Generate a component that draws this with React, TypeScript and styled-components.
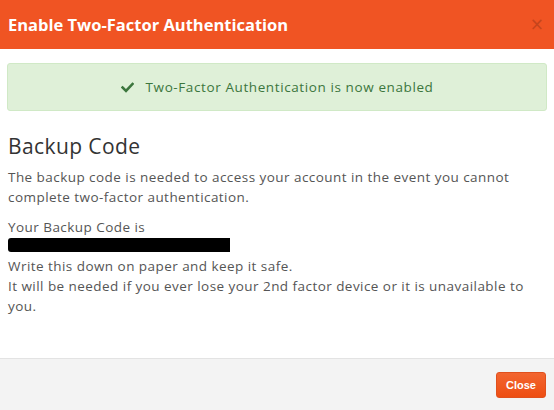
import React from "react";
import styled, { createGlobalStyle } from "styled-components";

const Global = createGlobalStyle`
  html, body { margin: 0; padding: 0; background: #fff; }
  body { font-family: "Open Sans", sans-serif; }
  * { box-sizing: border-box; }
`;

const Modal = styled.div`
  width: 554px;
  height: 410px;
  display: flex;
  flex-direction: column;
  background: #fff;
`;

const Header = styled.div`
  height: 49px;
  background: #f05423;
  display: flex;
  align-items: center;
  justify-content: space-between;
  padding: 0 10px 0 8px;
`;

const Title = styled.h4`
  margin: 0;
  font-family: "Open Sans", sans-serif;
  font-weight: 700;
  font-size: 16.5px;
  color: #fff;
`;

const CloseX = styled.button`
  border: 0;
  background: transparent;
  color: #b8401a;
  font-family: "DejaVu Sans", sans-serif;
  font-size: 17px;
  padding: 0;
  line-height: 1;
  opacity: 0.75;
  cursor: pointer;
`;

const Body = styled.div`
  flex: 1;
  padding: 14px 7px 0 7px;
  font-family: "Open Sans", sans-serif;
  font-size: 13.5px;
  letter-spacing: 0.45px;
  color: #555;
`;

const Alert = styled.div`
  height: 48px;
  background: #dff0d8;
  border: 1px solid #d0e9c6;
  border-radius: 3px;
  color: #3c763d;
  display: flex;
  align-items: center;
  justify-content: center;
  gap: 12px;
  letter-spacing: 0.6px;
`;

const Heading = styled.h3`
  margin: 21px 0 0 1px;
  font-family: "Open Sans", sans-serif;
  font-weight: 500;
  font-size: 21px;
  letter-spacing: 0.4px;
  line-height: 28px;
  color: #333;
`;

const Para = styled.p<{ $top?: number }>`
  margin: ${(p) => p.$top ?? 0}px 0 0 1px;
  line-height: 20px;
`;

const Redacted = styled.div`
  width: 222px;
  height: 14px;
  background: #000;
  border-radius: 3px 0 0 3px;
  margin: 1px 0 4px 1px;
`;

const Footer = styled.div`
  height: 52px;
  background: #f3f3f3;
  border-top: 1px solid #e3e3e3;
  display: flex;
  align-items: center;
  justify-content: flex-end;
  padding: 0 8px 0 0;
`;

const Button = styled.button`
  width: 50px;
  height: 26px;
  border: 1px solid #e0501d;
  border-radius: 3px;
  background: linear-gradient(#f26530, #ee4e12);
  color: #fff;
  font-family: "Liberation Sans", Arial, sans-serif;
  font-weight: 700;
  font-size: 11px;
  padding: 0;
`;

const Check = () => (
  <svg width="13" height="11" viewBox="0 0 13 11">
    <path d="M1.5 5.5 L5 9 L11.5 2" stroke="#3c763d" strokeWidth="2.6" fill="none" strokeLinecap="square" />
  </svg>
);

export default function App() {
  return (
    <Modal>
      <Global />
      <Header>
        <Title>Enable Two-Factor Authentication</Title>
        <CloseX aria-label="close">×</CloseX>
      </Header>
      <Body>
        <Alert>
          <Check />
          <span>Two-Factor Authentication is now enabled</span>
        </Alert>
        <Heading>Backup Code</Heading>
        <Para $top={7}>
          The backup code is needed to access your account in the event you cannot
          complete two-factor authentication.
        </Para>
        <Para $top={10}>Your Backup Code is</Para>
        <Redacted />
        <Para>Write this down on paper and keep it safe.</Para>
        <Para>It will be needed if you ever lose your 2nd factor device or it is unavailable to you.</Para>
      </Body>
      <Footer>
        <Button>Close</Button>
      </Footer>
    </Modal>
  );
}
